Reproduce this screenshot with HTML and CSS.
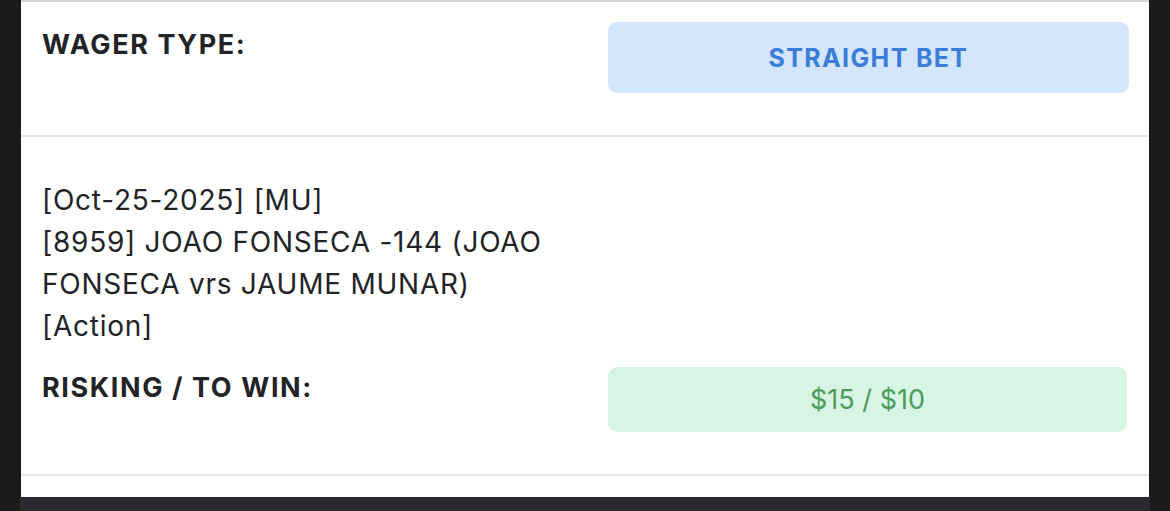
FILE: index.html
```html
<!DOCTYPE html>
<html>
<head>
<meta charset="utf-8">
<link rel="stylesheet" href="styles.css">
</head>
<body>
<div class="panel">
  <section class="row wager">
    <div class="label">WAGER TYPE:</div>
    <div class="pill pill-blue">STRAIGHT BET</div>
  </section>
  <section class="detail">
    <div class="desc">
      <div>[Oct-25-2025] [MU]</div>
      <div>[8959] JOAO FONSECA -144 (JOAO<br>FONSECA vrs JAUME MUNAR)</div>
      <div>[Action]</div>
    </div>
    <div class="row risk">
      <div class="label">RISKING / TO WIN:</div>
      <div class="pill pill-green">$15 / $10</div>
    </div>
  </section>
  <div class="spacer"></div>
</div>
<div class="footer"></div>
</body>
</html>
```

FILE: styles.css
```css
html, body {
  margin: 0;
  padding: 0;
}
body {
  background: #1b1b1b;
  font-family: Inter, "Noto Sans", sans-serif;
  color: #222326;
  width: 1170px;
  height: 511px;
  overflow: hidden;
}
.panel {
  margin: 0 21px;
  background: #ffffff;
  border-top: 2px solid #d5d5d5;
}
.row {
  display: flex;
  align-items: flex-start;
}
.label {
  width: 566px;
  flex: none;
  font-size: 27px;
  font-weight: 700;
  letter-spacing: 1.6px;
  line-height: 30px;
  color: #222326;
}
.wager {
  height: 135px;
  box-sizing: border-box;
  padding: 20px 20px 0 21px;
  border-bottom: 2px solid #e6e6e6;
}
.wager .label {
  padding-top: 8px;
}
.pill {
  flex: none;
  display: flex;
  align-items: center;
  justify-content: center;
  border-radius: 9px;
}
.pill-blue {
  width: 521px;
  height: 71px;
  background: #d3e6fb;
  color: #3b7dd8;
  font-size: 25px;
  font-weight: 700;
  letter-spacing: 1.35px;
}
.detail {
  height: 339px;
  box-sizing: border-box;
  padding: 42px 20px 0 21px;
  border-bottom: 2px solid #e6e6e6;
}
.desc {
  font-size: 28px;
  line-height: 42px;
  letter-spacing: 0.75px;
  color: #222326;
}
.risk {
  margin-top: 20px;
}
.risk .label {
  padding-top: 6px;
}
.pill-green {
  width: 519px;
  height: 65px;
  background: #d8f4e4;
  color: #4c9c5c;
  font-size: 27px;
  font-weight: 400;
}
.spacer {
  height: 21px;
}
.footer {
  margin: 0 20px;
  height: 20px;
  background: #2a2b2e;
}
```
